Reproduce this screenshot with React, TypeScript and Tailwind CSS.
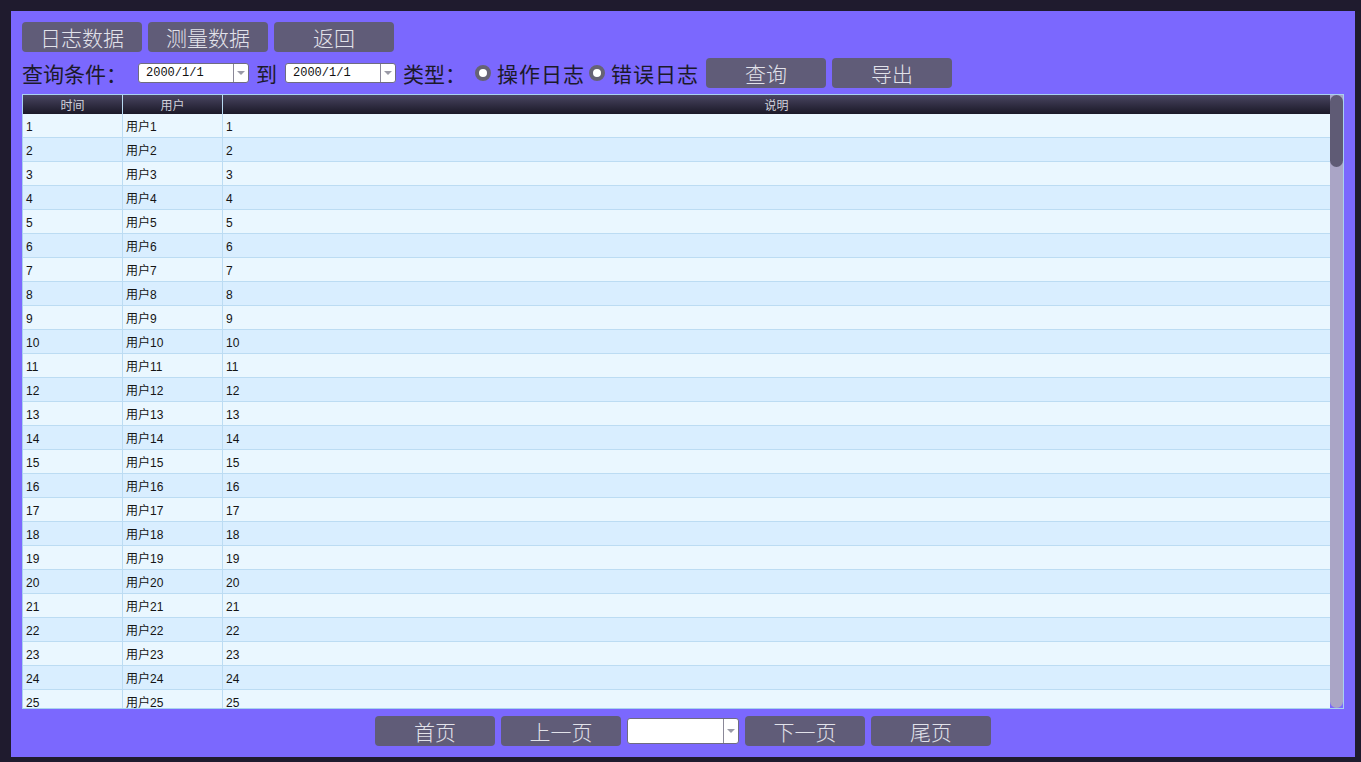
import React from "react";

const cjk = { fontFamily: '"Noto Sans CJK SC", "Liberation Sans", sans-serif' };
const cell = { fontFamily: '"Liberation Sans", "Noto Sans CJK SC", sans-serif' };

function Btn({ label }: { label: string }) {
  return (
    <div className="w-[120px] h-[30px] rounded-[4px] bg-[#605c78] text-[#e2e2ea] text-[21px] font-light leading-[30px] text-center shrink-0 whitespace-nowrap">
      {label}
    </div>
  );
}

function Arrow() {
  return (
    <div className="w-[15px] border-l border-[#8a8898] flex items-center justify-center">
      <div className="w-0 h-0 border-l-[4px] border-r-[4px] border-t-[4px] border-l-transparent border-r-transparent border-t-[#9a9aa6]" />
    </div>
  );
}

function DateBox({ value }: { value: string }) {
  return (
    <div className="w-[111px] h-[20px] bg-white border border-[#6f6c80] rounded-[3px] flex shrink-0">
      <div className="flex-1 pl-[7px] text-[12px] leading-[18px] text-[#111]" style={{ fontFamily: '"Liberation Mono", monospace' }}>
        {value}
      </div>
      <Arrow />
    </div>
  );
}

function Radio() {
  return <div className="w-[16px] h-[16px] rounded-full bg-white border-[4px] border-[#666374] shrink-0" />;
}

export default function App() {
  const rows = Array.from({ length: 25 }, (_, i) => i + 1);

  return (
    <div className="w-[1361px] h-[762px] bg-[#1f1b2e] pt-[11px] pl-[11px] overflow-hidden" style={cjk}>
      <div className="w-[1344px] h-[746px] bg-[#7b68fe] px-[11px] pt-[11px] flex flex-col">
        {/* top tabs */}
        <div className="flex gap-[6px]">
          <Btn label="日志数据" />
          <Btn label="测量数据" />
          <Btn label="返回" />
        </div>

        {/* query row */}
        <div className="flex items-center h-[30px] mt-[6px] text-[21px] text-[#1c1a2a] whitespace-nowrap">
          <span className="w-[116px] leading-[30px] shrink-0">查询条件：</span>
          <DateBox value="2000/1/1" />
          <span className="ml-[7px] leading-[30px]">到</span>
          <div className="ml-[8px]">
            <DateBox value="2000/1/1" />
          </div>
          <span className="ml-[7px] leading-[30px] shrink-0">类型：</span>
          <div className="ml-[9px]">
            <Radio />
          </div>
          <span className="ml-[6px] leading-[30px] tracking-[1px]">操作日志</span>
          <div className="ml-[4px]">
            <Radio />
          </div>
          <span className="ml-[6px] leading-[30px] tracking-[1px]">错误日志</span>
          <div className="ml-[7px] flex gap-[6px]">
            <Btn label="查询" />
            <Btn label="导出" />
          </div>
        </div>

        {/* table */}
        <div className="mt-[6px] h-[615px] border border-[#a9d2ef] flex overflow-hidden">
          <div className="flex-1 flex flex-col overflow-hidden">
            <div className="grid grid-cols-[100px_100px_1fr] h-[19px] shrink-0 bg-gradient-to-b from-[#4a4662] to-[#1b1928] text-[12px] leading-[19px] text-[#d2d2dc] text-center">
              <div className="border-r border-[#b8daf2]">时间</div>
              <div className="border-r border-[#b8daf2]">用户</div>
              <div>说明</div>
            </div>
            {rows.map((n) => (
              <div
                key={"logrow" + n}
                className={`grid grid-cols-[100px_100px_1fr] h-[24px] shrink-0 border-b border-[#bcdcf3] text-[12px] text-[#141414] ${
                  n % 2 === 1 ? "bg-[#eaf7ff]" : "bg-[#d9eeff]"
                }`}
                style={cell}
              >
                <div className="border-r border-[#bcdcf3] pl-[3px] flex items-center pt-[2px]">{n}</div>
                <div className="border-r border-[#bcdcf3] pl-[3px] flex items-center pt-[2px]">用户{n}</div>
                <div className="pl-[3px] flex items-center pt-[2px]">{n}</div>
              </div>
            ))}
          </div>
          <div className="w-[13px] bg-[#aaa5c6] rounded-b-[7px] flex flex-col shrink-0">
            <div className="h-[72px] bg-[#5f5b75] rounded-[7px]" />
          </div>
        </div>

        {/* pager */}
        <div className="mt-[7px] flex justify-center items-center gap-[6px]">
          <Btn label="首页" />
          <Btn label="上一页" />
          <div className="w-[112px] h-[26px] bg-white border border-[#6f6c80] rounded-[3px] flex">
            <div className="flex-1" />
            <Arrow />
          </div>
          <Btn label="下一页" />
          <Btn label="尾页" />
        </div>
      </div>
    </div>
  );
}
